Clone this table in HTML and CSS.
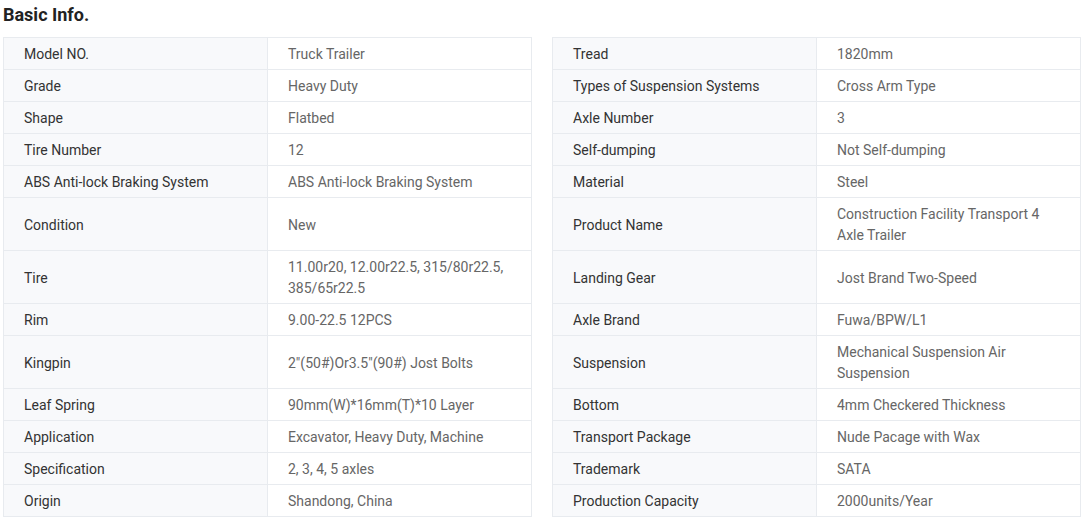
FILE: index.html
```html
<!DOCTYPE html>
<html lang="en">

<head>
    <meta charset="UTF-8">
    <title>Basic Info.</title>
    <link rel="stylesheet" href="styles.css">
</head>

<body>
    <h2 class="title">Basic Info.</h2>

    <div class="info">
        <!-- Left column -->
        <table class="info-table">
            <tr><th>Model NO.</th><td>Truck Trailer</td></tr>
            <tr><th>Grade</th><td>Heavy Duty</td></tr>
            <tr><th>Shape</th><td>Flatbed</td></tr>
            <tr><th>Tire Number</th><td>12</td></tr>
            <tr><th>ABS Anti-lock Braking System</th><td>ABS Anti-lock Braking System</td></tr>
            <tr class="tall"><th>Condition</th><td>New</td></tr>
            <tr><th>Tire</th><td>11.00r20, 12.00r22.5, 315/80r22.5, 385/65r22.5</td></tr>
            <tr><th>Rim</th><td>9.00-22.5 12PCS</td></tr>
            <tr class="tall"><th>Kingpin</th><td>2"(50#)Or3.5"(90#) Jost Bolts</td></tr>
            <tr><th>Leaf Spring</th><td>90mm(W)*16mm(T)*10 Layer</td></tr>
            <tr><th>Application</th><td>Excavator, Heavy Duty, Machine</td></tr>
            <tr><th>Specification</th><td>2, 3, 4, 5 axles</td></tr>
            <tr><th>Origin</th><td>Shandong, China</td></tr>
        </table>

        <!-- Right column -->
        <table class="info-table">
            <tr><th>Tread</th><td>1820mm</td></tr>
            <tr><th>Types of Suspension Systems</th><td>Cross Arm Type</td></tr>
            <tr><th>Axle Number</th><td>3</td></tr>
            <tr><th>Self-dumping</th><td>Not Self-dumping</td></tr>
            <tr><th>Material</th><td>Steel</td></tr>
            <tr><th>Product Name</th><td>Construction Facility Transport 4 Axle Trailer</td></tr>
            <tr class="tall"><th>Landing Gear</th><td>Jost Brand Two-Speed</td></tr>
            <tr><th>Axle Brand</th><td>Fuwa/BPW/L1</td></tr>
            <tr><th>Suspension</th><td>Mechanical Suspension Air Suspension</td></tr>
            <tr><th>Bottom</th><td>4mm Checkered Thickness</td></tr>
            <tr><th>Transport Package</th><td>Nude Pacage with Wax</td></tr>
            <tr><th>Trademark</th><td>SATA</td></tr>
            <tr><th>Production Capacity</th><td>2000units/Year</td></tr>
        </table>
    </div>
</body>

</html>
```

FILE: styles.css
```css
/* Global reset */
* {
    box-sizing: border-box;
    margin: 0;
    padding: 0;
}

body {
    font-family: Roboto, "Liberation Sans", Arial, sans-serif;
    font-size: 14px;
    color: #333;
    background: #fff;
    padding: 0 4px 0 3px;
}

.title {
    font-size: 18px;
    font-weight: bold;
    color: #222;
    line-height: 22px;
    padding-top: 4px;
    height: 37px;
}

/* Two tables side by side */
.info {
    display: flex;
    gap: 20px;
}

.info-table {
    flex: 1;
    border-collapse: collapse;
    table-layout: fixed;
}

.info-table th,
.info-table td {
    border: 1px solid #e8ebef;
    padding: 6px 20px 4px;
    line-height: 21px;
    text-align: left;
    vertical-align: middle;
    font-weight: normal;
}

.info-table th {
    width: 50%;
    background-color: #f8f9fb;
    color: #333;
}

.info-table td {
    color: #666;
}

.info-table tr.tall th,
.info-table tr.tall td {
    height: 53px;
}
```
